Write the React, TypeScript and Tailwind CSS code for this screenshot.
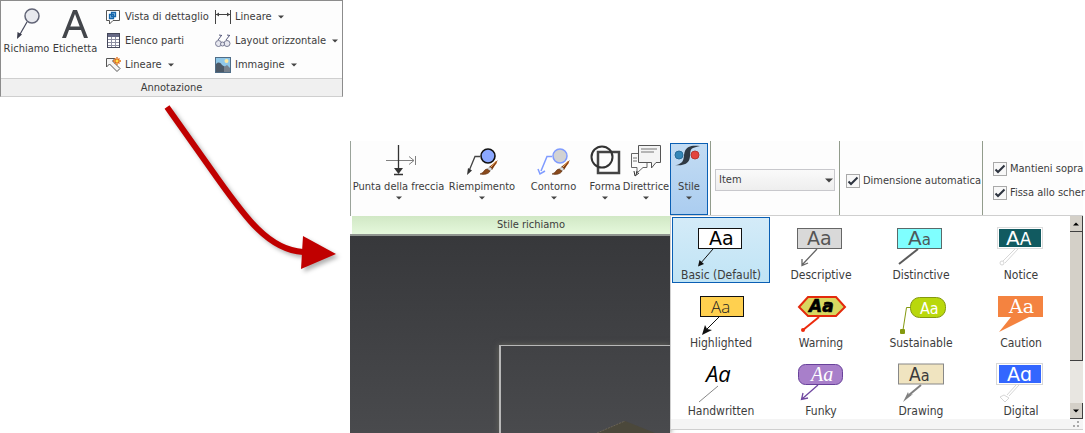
import type { ReactNode } from "react";

interface ToolProps {
  label: string;
  children: ReactNode;
  menu?: boolean;
  className?: string;
}

interface CalloutStyle {
  name: string;
  drawing: ReactNode;
}

function Caret() {
  return (
    <svg width="6" height="4" viewBox="0 0 6 4" className="shrink-0">
      <path d="M0 0.5H6L3 3.5Z" fill="#444" />
    </svg>
  );
}

function SmallTool({ label, children, menu }: ToolProps) {
  return (
    <button className="flex h-6 items-center gap-1 whitespace-nowrap">
      <svg width="16" height="16" viewBox="0 0 16 16" fill="none" className="shrink-0">
        {children}
      </svg>
      <span className="mr-0.5">{label}</span>
      {menu && <Caret />}
    </button>
  );
}

function LargeTool({ label, children, className = "" }: ToolProps) {
  return (
    <button className={`flex flex-col items-center whitespace-nowrap ${className}`}>
      <svg width="34" height="36" viewBox="0 0 34 36" fill="none">
        {children}
      </svg>
      <span className="mb-px leading-4">{label}</span>
      <Caret />
    </button>
  );
}

function Brush() {
  return (
    <g>
      <path d="M31 18L25 24L27 26L32 20Z" fill="#e8833a" />
      <path d="M33 17L27 27L24 24Z" fill="#7a3b12" />
      <path d="M31 18L26 24" stroke="#f7b26b" />
      <path d="M25 24L22 26L24 29L27 26Z" fill="#d9d9d9" stroke="#8a8a8a" strokeWidth="0.5" />
      <path d="M22 26C19 26 19 30 15 31C19 32 24 31 25 28Z" fill="#8a4a1c" stroke="#5b2c0d" strokeWidth="0.6" />
    </g>
  );
}

function Check({ label }: { label: string }) {
  return (
    <label className="flex items-center gap-[3px] whitespace-nowrap">
      <span className="grid shrink-0">
        <input
          type="checkbox"
          defaultChecked
          className="col-start-1 row-start-1 size-[14px] appearance-none border border-[#a9a9a9] bg-[#f8f8f8]"
        />
        <svg
          width="14"
          height="14"
          viewBox="0 0 14 14"
          fill="none"
          className="pointer-events-none col-start-1 row-start-1"
        >
          <path d="M2.5 7.5L5 10L11.5 3.5" stroke="#2e3440" strokeWidth="2" />
        </svg>
      </span>
      {label}
    </label>
  );
}

const styles: CalloutStyle[] = [
  {
    name: "Basic (Default)",
    drawing: (
      <>
        <path d="M22 24L9 39" stroke="#111" />
        <path d="M7 41.500L8.500 35L13 39Z" fill="#111" />
        <rect x="7.500" y="3.500" width="43" height="20" fill="#fff" stroke="#111" />
        <text x="18" y="20" fontSize="19" fill="#000" className="font-['DejaVu_Sans']">Aa</text>
      </>
    ),
  },
  {
    name: "Descriptive",
    drawing: (
      <>
        <path d="M26 24L11 40M11 34V40.500L17 38" stroke="#666" strokeWidth="1.300" />
        <rect x="6.500" y="3.500" width="44" height="20" fill="#d9d9d9" stroke="#666" />
        <text x="16" y="20" fontSize="19" fill="#555" className="font-['DejaVu_Sans']">Aa</text>
      </>
    ),
  },
  {
    name: "Distinctive",
    drawing: (
      <>
        <path d="M27 24L8 39" stroke="#5a5a5a" strokeWidth="2" />
        <rect x="6.500" y="3.500" width="44" height="20" fill="#7fffff" stroke="#5a6a6a" />
        <text x="17" y="20" fill="#4d5a5a" className="font-['DejaVu_Sans']">
          <tspan fontSize="20">A</tspan>
          <tspan fontSize="15">a</tspan>
        </text>
      </>
    ),
  },
  {
    name: "Notice",
    drawing: (
      <>
        <path d="M24 24L12 36M27 24L14 38" stroke="#d6d6d6" />
        <circle cx="11" cy="38" r="2" stroke="#d6d6d6" />
        <rect x="6.500" y="2.500" width="45" height="21" fill="#fff" stroke="#ddd" />
        <rect x="8" y="4" width="42" height="18" fill="#115a60" />
        <text x="15" y="20" fill="#fff" className="font-['DejaVu_Sans']">
          <tspan fontSize="20">A</tspan>
          <tspan fontSize="17">A</tspan>
        </text>
      </>
    ),
  },
  {
    name: "Highlighted",
    drawing: (
      <>
        <path d="M28 24L15 37" stroke="#111" />
        <path d="M11 42L14 32L16 36L21 37Z" fill="#111" />
        <rect x="9.500" y="3.500" width="43" height="20" fill="#ffd04f" stroke="#111" />
        <text x="20" y="20" fontSize="17" fill="#222" className="font-['Open_Sans'] font-light">Aa</text>
      </>
    ),
  },
  {
    name: "Warning",
    drawing: (
      <>
        <path d="M28 24L12 37" stroke="#ec2a0c" strokeWidth="2" />
        <circle cx="12" cy="37" r="2" fill="#ec2a0c" />
        <path d="M8 14L17 4H45L54 14L45 23H17Z" fill="#d8d860" stroke="#e32a0c" strokeWidth="2" />
        <text
          x="18"
          y="19"
          fontSize="17"
          fill="#000"
          stroke="#000"
          strokeWidth="0.6"
          className="font-['DejaVu_Sans'] font-bold italic"
        >
          Aa
        </text>
      </>
    ),
  },
  {
    name: "Sustainable",
    drawing: (
      <>
        <path d="M20 14.500H15.500L12 37" stroke="#84990f" />
        <rect x="9" y="36" width="5" height="5" rx="1" fill="#84990f" />
        <rect x="19.500" y="4.500" width="35" height="20" rx="9" fill="#b9d80c" stroke="#84990f" />
        <text x="29" y="21" fontSize="16" fill="#fff" className="font-['Liberation_Sans_Narrow','DejaVu_Sans_Condensed']">
          Aa
        </text>
      </>
    ),
  },
  {
    name: "Caution",
    drawing: (
      <>
        <path d="M7 3H52V24H38L8 39L20 24H7Z" fill="#f48340" />
        <text x="18" y="20" fontSize="19" fill="#fff" className="font-['DejaVu_Serif']">Aa</text>
      </>
    ),
  },
  {
    name: "Handwritten",
    drawing: (
      <>
        <path d="M27 25L8 41" stroke="#888" />
        <text x="15" y="21" fontSize="22" fill="#000" className="font-['Open_Sans'] italic">Aa</text>
      </>
    ),
  },
  {
    name: "Funky",
    drawing: (
      <>
        <path d="M27 24L11 38M12 32L10.500 38.500L17 37" stroke="#7048a0" strokeWidth="1.300" />
        <rect x="7.500" y="3.500" width="44" height="20" rx="7" fill="#a87fca" stroke="#68419a" />
        <text x="20" y="20" fontSize="20" fill="#fff" className="font-['Liberation_Serif'] italic">Aa</text>
      </>
    ),
  },
  {
    name: "Drawing",
    drawing: (
      <>
        <path d="M30 24L18 34" stroke="#808080" strokeWidth="2" />
        <path d="M12 41L17 31L18 34L22 33Z" fill="#808080" />
        <rect x="7.500" y="3" width="45" height="20" fill="#f0e4c0" stroke="#888" />
        <text x="18" y="20" fontSize="19" fill="#3b3b3b" className="font-['DejaVu_Sans_Condensed']">
          <tspan>A</tspan>
          <tspan fontSize="16">a</tspan>
        </text>
      </>
    ),
  },
  {
    name: "Digital",
    drawing: (
      <>
        <path d="M25 24L16 34M28 24L18 35M13 34L9 36L14 41L18 37Z" stroke="#d6d6d6" />
        <rect x="5.500" y="2.500" width="46" height="21" fill="#fff" stroke="#d8d8d8" />
        <rect x="8" y="4" width="42" height="18" fill="#3366ff" />
        <text x="16" y="20" fontSize="19" fill="#fff" className="font-['DejaVu_Sans']">
          Aɑ
        </text>
      </>
    ),
  },
];

function AnnotationRibbon() {
  return (
    <section className="w-[343px] border border-t-[#8c8c8c] border-r-[#8c8c8c] border-b-[#cfcfcf] border-l-[#8c8c8c] bg-[#fdfdfd]">
      <div className="flex h-[77px] pt-1 pl-1">
        <button className="flex w-[43px] flex-col items-center self-start">
          <svg width="30" height="36" viewBox="0 0 30 36" fill="none">
            <circle cx="20" cy="11" r="7" fill="#e8e9ee" stroke="#626577" strokeWidth="1.500" />
            <path d="M15 17L7 31" stroke="#45485c" strokeWidth="1.200" />
            <path d="M5 34L5.500 27L10 29.500Z" fill="#3b3d4c" />
          </svg>
          <span className="leading-4">Richiamo</span>
        </button>
        <button className="ml-1 flex w-[46px] flex-col items-center self-start">
          <svg width="30" height="36" viewBox="0 0 30 36">
            <path d="M2 33L13 5H17L28 33H24L21 25H9L6 33ZM10.300 21.500H19.700L15 9Z" fill="#43464b" fillRule="evenodd" />
          </svg>
          <span className="leading-4">Etichetta</span>
        </button>
        <div className="ml-[7px] flex w-[110px] flex-col items-start">
          <SmallTool label="Vista di dettaglio">
            <path d="M1.500 1.500H14.500V11.500H8L4.500 15V11.500H1.500Z" fill="#fff" stroke="#555" />
            <path d="M4.500 5.500H8.500V9.500H4.500ZM6.500 3.500H10.500V7.500H6.500Z" fill="#a5d0f2" stroke="#1666aa" strokeWidth="1.300" />
          </SmallTool>
          <SmallTool label="Elenco parti">
            <rect x="2.500" y="0.500" width="12" height="14" fill="#fff" stroke="#44475a" />
            <path d="M3 1H14V4H3Z" fill="#666985" />
            <path d="M3 6.500H14M3 9.500H14M3 12.500H14M6.500 4V14M10.500 4V14" stroke="#8d8fa3" />
          </SmallTool>
          <SmallTool label="Lineare" menu>
            <path d="M1.500 1.500H10L7.500 4L15 11.500L12 14.500L4.500 7L1.500 10Z" fill="#f5f5f5" stroke="#555" />
            <path d="M12 0V8M8 4H16M9.500 1.500L14.500 6.500M14.500 1.500L9.500 6.500" stroke="#e06a12" strokeWidth="1.300" />
            <circle cx="12" cy="4" r="1.500" fill="#ffe24d" />
          </SmallTool>
        </div>
        <div className="flex flex-col items-start">
          <SmallTool label="Lineare" menu>
            <path d="M0.500 1V15M15.500 1V15M1 5.500H15" stroke="#444" />
            <path d="M1 5.500L4 3.500V7.500ZM15 5.500L12 3.500V7.500Z" fill="#444" />
          </SmallTool>
          <SmallTool label="Layout orizzontale" menu>
            <circle cx="3.500" cy="10.500" r="3" fill="#e7e8f0" stroke="#787b94" />
            <circle cx="12" cy="10.500" r="3" fill="#e7e8f0" stroke="#787b94" />
            <circle cx="7.500" cy="11" r="2" fill="#e7e8f0" stroke="#787b94" />
            <path d="M3 7L6.500 2.500M11 7L14.500 2.500M4 2L7 2.500M12 2L15 2.500" stroke="#55587a" />
          </SmallTool>
          <SmallTool label="Immagine" menu>
            <rect x="0.500" y="0.500" width="15" height="15" fill="#8fc7e8" stroke="#4f6d87" />
            <path d="M1 7C3 5 5 5 7 8L15 13V15H1Z" fill="#4c5967" />
            <path d="M9 15V10L12 8L15 11V15Z" fill="#77818c" />
            <circle cx="11.500" cy="4" r="2" fill="#ffe9a0" />
          </SmallTool>
        </div>
      </div>
      <h2 className="border-t border-[#cfcfcf] bg-[#f0f0f0] text-center leading-[17px]">Annotazione</h2>
    </section>
  );
}

function CalloutRibbon() {
  return (
    <div className="flex h-[75px] border-l border-[#9aa39a] bg-[#fdfdfd] pt-0.5">
      <LargeTool label="Punta della freccia" className="w-[95px] shrink-0">
        <path d="M4 17.500H32M27 13.500L32 17.500L27 21.500M33.500 13V22" stroke="#808080" />
        <path d="M16.500 2V29M12 31.500H21" stroke="#333" strokeWidth="1.300" />
        <path d="M12 25H21L16.500 31Z" fill="#333" />
      </LargeTool>
      <LargeTool label="Riempimento" className="w-[72px] shrink-0">
        <path d="M15 13.500H10L4 28" stroke="#444" strokeWidth="1.300" />
        <path d="M2 32L3 25L7 27.500Z" fill="#333" />
        <circle cx="23" cy="13" r="7" fill="#8ba8ff" stroke="#111" strokeWidth="1.600" />
        <Brush />
      </LargeTool>
      <LargeTool label="Contorno" className="w-[71px] shrink-0">
        <path d="M15 13.500H10L4 28" stroke="#7f9bff" strokeWidth="1.500" />
        <path d="M1 26L3 31L8 28" stroke="#7f9bff" strokeWidth="1.500" />
        <circle cx="23" cy="13" r="7" fill="#d2d2d2" stroke="#7f9bff" strokeWidth="1.500" />
        <Brush />
      </LargeTool>
      <LargeTool label="Forma" className="w-8 shrink-0">
        <rect x="10" y="9" width="21" height="21" stroke="#444" strokeWidth="2.500" />
        <circle cx="14" cy="14" r="10.500" stroke="#333" strokeWidth="2" />
      </LargeTool>
      <LargeTool label="Direttrice" className="ml-px w-12 shrink-0">
        <path d="M9 10.500H2.500V24.500H8V30L14 24.500H18V18" fill="#fafafa" stroke="#666" />
        <path d="M9.500 2.500H31.500V19.500H27L22.500 25V19.500H9.500Z" fill="#f4f4f4" stroke="#555" />
        <path d="M12 6H28M12 9H25M4 15H8M4 18H8" stroke="#777" />
        <path d="M8 28L7 32M5 28L6 33L10 30" stroke="#333" />
      </LargeTool>
    </div>
  );
}

function ModelView() {
  return (
    <div className="flex flex-1 flex-col border-t-2 border-[#909590] bg-linear-to-b from-[#37383b] to-[#494a4d] pt-[109px] pl-[149px]">
      <div className="flex flex-1 items-end justify-center border-t border-l-2 border-[#b8b8b8] pl-20 shadow-[0_0_6px_#66665e]">
        <svg width="58" height="12" viewBox="0 0 58 12" className="shrink-0">
          <path d="M0 12L28 0L58 12Z" fill="#4b483b" />
          <path d="M0 12L28 0" stroke="#8a7f68" strokeDasharray="2 1" strokeWidth="0.5" fill="none" />
        </svg>
      </div>
    </div>
  );
}

function OptionsBar() {
  return (
    <div className="flex h-[74px] bg-[#fdfdfd]">
      <button className="mt-0.5 flex w-[38px] shrink-0 flex-col items-center border border-[#0a5fb4] bg-linear-to-b from-[#c3dcf3] to-[#abcdf0]">
        <svg width="30" height="35" viewBox="0 0 30 35" fill="none">
          <circle cx="5" cy="11" r="4" fill="#3487b8" stroke="#286c98" />
          <circle cx="21" cy="11" r="4" fill="#e3443e" stroke="#b83730" />
          <path
            d="M26 2C18 1 13 2 11 7C9 12 11 17 6 19.500C4.500 20.500 3 21 1 21C9 22 14 20 15.500 15C17 10 15 6 19 4C21 3 23 3 26 2Z"
            fill="#2f3944"
          />
        </svg>
        <span className="mb-px leading-4">Stile</span>
        <Caret />
      </button>
      <div className="ml-0.5 flex w-[129px] shrink-0 items-center border-l border-[#929c8c] px-1 pt-1">
        <div className="grid w-full items-center">
          <select
            aria-label="Stile elemento"
            className="col-start-1 row-start-1 h-[22px] appearance-none border border-[#c8c8cc] bg-linear-to-b from-[#fafafa] to-[#eeeeee] px-[3px]"
          >
            <option>Item</option>
          </select>
          <svg
            width="8"
            height="5"
            viewBox="0 0 8 5"
            className="pointer-events-none col-start-1 row-start-1 mr-[2px] justify-self-end"
          >
            <path d="M0 0.500H8L4 4.500Z" fill="#444" />
          </svg>
        </div>
      </div>
      <div className="flex w-[143px] shrink-0 items-center border-l border-[#929c8c] pt-1.5 pl-1.5">
        <Check label="Dimensione automatica" />
      </div>
      <div className="flex min-w-0 flex-1 flex-col justify-center gap-2 border-l border-[#929c8c] pt-1.5 pl-2.5 leading-4">
        <Check label="Mantieni sopra" />
        <Check label="Fissa allo scher" />
      </div>
    </div>
  );
}

function StyleGallery() {
  return (
    <div className="border border-r-0 border-[#cfcfcf] bg-white">
      <div className="flex">
        <div className="grid flex-1 grid-cols-4 gap-0.5 pt-px pl-px text-xs">
          {styles.map((style, index) => (
            <button
              key={style.name}
              className={`flex h-[66px] flex-col items-center border pt-[7px] whitespace-nowrap ${
                index === 0
                  ? "border-[#0a5fb4] bg-linear-to-b from-[#d4ebf8] to-[#c0e4f5]"
                  : "border-transparent"
              }`}
            >
              <svg width="60" height="42" viewBox="0 0 60 42" fill="none" className="shrink-0">
                {style.drawing}
              </svg>
              <span className="leading-4">{style.name}</span>
            </button>
          ))}
        </div>
        <div className="flex w-[13px] shrink-0 flex-col bg-[#e8e6e1]">
          <button
            aria-label="Su"
            className="flex h-4 items-center justify-center border-r border-b border-[#404040] bg-[#d4d0c8]"
          >
            <svg width="6" height="4" viewBox="0 0 6 4">
              <path d="M0 3.500H6L3 0.500Z" fill="#000" />
            </svg>
          </button>
          <div className="h-[129px] border-r border-b border-[#404040] bg-[#d4d0c8]" />
          <button
            aria-label="Giù"
            className="mt-auto flex h-4 items-center justify-center border-r border-b border-[#404040] bg-[#d4d0c8]"
          >
            <svg width="6" height="4" viewBox="0 0 6 4">
              <path d="M0 0.500H6L3 3.500Z" fill="#000" />
            </svg>
          </button>
        </div>
      </div>
      <div className="flex h-2.5 items-center justify-end bg-[#f5f5f5] pr-1">
        <svg width="6" height="6" viewBox="0 0 6 6" fill="#aaa">
          <path d="M4 0H6V2H4ZM0 4H2V6H0ZM4 4H6V6H4Z" />
        </svg>
      </div>
    </div>
  );
}

export default function App() {
  return (
    <main className="relative flex min-h-screen flex-col overflow-hidden bg-white font-['DejaVu_Sans_Condensed','DejaVu_Sans',sans-serif] text-[11px] text-[#3c3c3c]">
      <AnnotationRibbon />
      <svg
        width="200"
        height="190"
        viewBox="150 95 200 190"
        fill="none"
        className="pointer-events-none absolute top-[95px] left-[150px] drop-shadow-[3px_3px_2px_rgba(0,0,0,0.3)]"
      >
        <path d="M167 107L213 172C243 214 267 250 303 252" stroke="#c00000" strokeWidth="6" />
        <path d="M303 236L336 254L301 269Z" fill="#c00000" />
      </svg>
      <div className="mt-11 flex flex-1 pr-0.5 pl-[350px]">
        <div className="flex w-80 shrink-0 flex-col">
          <CalloutRibbon />
          <h2 className="ml-0.5 bg-linear-to-b from-[#d1e8c5] to-[#e5f8dc] pl-10 text-center leading-[18px]">
            Stile richiamo
          </h2>
          <ModelView />
        </div>
        <div className="flex min-w-0 flex-1 flex-col">
          <OptionsBar />
          <StyleGallery />
        </div>
      </div>
    </main>
  );
}
